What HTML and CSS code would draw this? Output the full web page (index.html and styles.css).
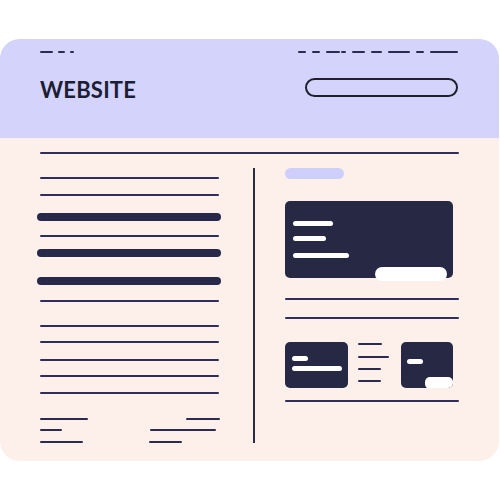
FILE: index.html
```html
<!DOCTYPE html>
<html lang="en">

<head>
  <meta charset="UTF-8">
  <meta name="viewport" content="width=device-width, initial-scale=1.0">
  <title>Website Wireframe</title>
  <link rel="stylesheet" href="styles.css">
</head>

<body>
  <div class="page">
    <!-- Header -->
    <div class="header">
      <div class="top-row">
        <div class="crumbs">
          <span class="seg w13"></span><span class="seg w7"></span><span class="seg w4"></span>
        </div>
        <div class="nav">
          <span class="seg w8"></span><span class="seg w8"></span><span class="seg w14"></span>
          <span class="seg w5 tight"></span><span class="seg w13"></span><span class="seg w11"></span>
          <span class="seg w22"></span><span class="seg w8"></span><span class="seg w28"></span>
        </div>
      </div>
      <div class="title-row">
        <h1 class="logo">WEBSITE</h1>
        <div class="search"></div>
      </div>
    </div>

    <!-- Content -->
    <div class="content">
      <div class="rule"></div>
      <div class="columns">
        <div class="left-col">
          <div class="line"></div>
          <div class="line mt15"></div>
          <div class="bar mt17"></div>
          <div class="line mt14"></div>
          <div class="bar mt12"></div>
          <div class="bar mt20"></div>
          <div class="line mt15"></div>
          <div class="line mt23"></div>
          <div class="line mt14"></div>
          <div class="line mt16"></div>
          <div class="line mt14"></div>
          <div class="line mt15"></div>

          <div class="foot-row mt24">
            <span class="seg w48"></span><span class="seg w34 push-end"></span>
          </div>
          <div class="foot-row mt9">
            <span class="seg w22"></span><span class="seg w66 push-a"></span>
          </div>
          <div class="foot-row mt10">
            <span class="seg w43"></span><span class="seg w33 push-b"></span>
          </div>
        </div>

        <div class="divider"></div>

        <div class="right-col">
          <div class="tag"></div>

          <div class="feature">
            <div class="pill w40"></div>
            <div class="pill w33 mt10"></div>
            <div class="pill w56 mt12"></div>
            <div class="feature-btn"></div>
          </div>

          <div class="line mt20"></div>
          <div class="line mt17"></div>

          <div class="tiles">
            <div class="tile tile-wide">
              <div class="pill w16"></div>
              <div class="pill w50 mt5"></div>
            </div>
            <div class="mini-text">
              <span class="seg w24"></span>
              <span class="seg w31"></span>
              <span class="seg w23"></span>
              <span class="seg w23"></span>
            </div>
            <div class="tile tile-small">
              <div class="pill w16"></div>
              <div class="tile-btn"></div>
            </div>
          </div>

          <div class="line mt12"></div>
        </div>
      </div>
    </div>
  </div>
</body>

</html>
```

FILE: styles.css
```css
body {
  margin: 0;
  padding: 39px 1px 0 0;
  background: #fff;
  font-family: 'Lato', 'Open Sans', sans-serif;
}

.page {
  height: 422px;
  background: #fdf0ea;
  border-radius: 20px;
  overflow: hidden;
}

/* header */

.header {
  height: 99px;
  background: #d3d3fb;
  padding: 0 41px 0 40px;
  box-sizing: border-box;
}

.top-row {
  display: flex;
  justify-content: space-between;
  padding-top: 12px;
}

.crumbs,
.nav {
  display: flex;
  gap: 5px;
}

.nav {
  gap: 6px;
}

.nav .tight {
  margin-left: -5px;
}

.seg {
  display: block;
  flex-shrink: 0;
  height: 2px;
  background: #2b2a4f;
  border-radius: 1px;
}

.title-row {
  display: flex;
  justify-content: space-between;
  align-items: center;
  margin-top: 24px;
}

.logo {
  margin: 0;
  font-size: 22px;
  font-weight: 700;
  color: #1d1d33;
  letter-spacing: 0.2px;
  line-height: 26px;
}

.search {
  width: 153px;
  height: 19px;
  border: 2px solid #1f1f2e;
  border-radius: 10px;
  box-sizing: border-box;
  margin-top: -6px;
}

/* content */

.content {
  padding: 14px 40px 0 40px;
}

.rule {
  height: 2px;
  background: #2e2d5c;
  border-radius: 1px;
}

.columns {
  display: flex;
  align-items: flex-start;
  margin-top: 14px;
}

.left-col {
  flex-shrink: 0;
  width: 181px;
  padding-top: 9px;
}

.divider {
  flex-shrink: 0;
  width: 2px;
  height: 275px;
  background: #2b2b45;
  margin: 0 30px 0 32px;
}

.right-col {
  flex-shrink: 0;
  width: 174px;
}

.line {
  height: 2px;
  width: 179px;
  background: #2e2d5c;
  border-radius: 1px;
}

.right-col .line {
  width: 174px;
}

.bar {
  height: 8px;
  width: 184px;
  margin-left: -3px;
  background: #28294a;
  border-radius: 4px;
}

.foot-row {
  display: flex;
  width: 180px;
}

.push-end { margin-left: auto; }
.push-a { margin-left: 88px; }
.push-b { margin-left: 66px; }

.tag {
  width: 59px;
  height: 11px;
  background: #cfcffc;
  border-radius: 6px;
}

.feature {
  position: relative;
  width: 168px;
  height: 77px;
  margin-top: 22px;
  padding: 20px 0 0 8px;
  box-sizing: border-box;
  background: #272844;
  border-radius: 5px;
}

.pill {
  height: 5px;
  background: #fff;
  border-radius: 3px;
}

.feature-btn {
  position: absolute;
  left: 90px;
  top: 66px;
  width: 72px;
  height: 14px;
  background: #fff;
  border-radius: 7px;
}

.tiles {
  display: flex;
  align-items: flex-start;
  margin-top: 23px;
}

.tile {
  position: relative;
  flex-shrink: 0;
  height: 46px;
  background: #272844;
  border-radius: 5px;
  box-sizing: border-box;
}

.tile-wide {
  width: 63px;
  padding: 14px 0 0 7px;
}

.tile-small {
  width: 52px;
  margin-left: 12px;
  padding: 17px 0 0 6px;
  overflow: hidden;
}

.tile-btn {
  position: absolute;
  right: 0;
  bottom: -1px;
  width: 28px;
  height: 12px;
  background: #fff;
  border-radius: 5px;
}

.mini-text {
  display: flex;
  flex-direction: column;
  gap: 10px;
  margin-left: 10px;
  padding-top: 1px;
  width: 31px;
}

.mini-text .seg:nth-child(2) {
  margin-top: 1px;
}

/* widths */
.w4 { width: 4px; }
.w5 { width: 5px; }
.w7 { width: 7px; }
.w8 { width: 8px; }
.w11 { width: 11px; }
.w13 { width: 13px; }
.w14 { width: 14px; }
.w16 { width: 16px; }
.w22 { width: 22px; }
.w23 { width: 23px; }
.w24 { width: 24px; }
.w28 { width: 28px; }
.w31 { width: 31px; }
.w33 { width: 33px; }
.w34 { width: 34px; }
.w40 { width: 40px; }
.w43 { width: 43px; }
.w48 { width: 48px; }
.w50 { width: 50px; }
.w56 { width: 56px; }
.w66 { width: 66px; }

/* spacing */
.mt5 { margin-top: 5px; }
.mt9 { margin-top: 9px; }
.mt10 { margin-top: 10px; }
.mt12 { margin-top: 12px; }
.mt14 { margin-top: 14px; }
.mt15 { margin-top: 15px; }
.mt16 { margin-top: 16px; }
.mt17 { margin-top: 17px; }
.mt20 { margin-top: 20px; }
.mt23 { margin-top: 23px; }
.mt24 { margin-top: 24px; }
```
